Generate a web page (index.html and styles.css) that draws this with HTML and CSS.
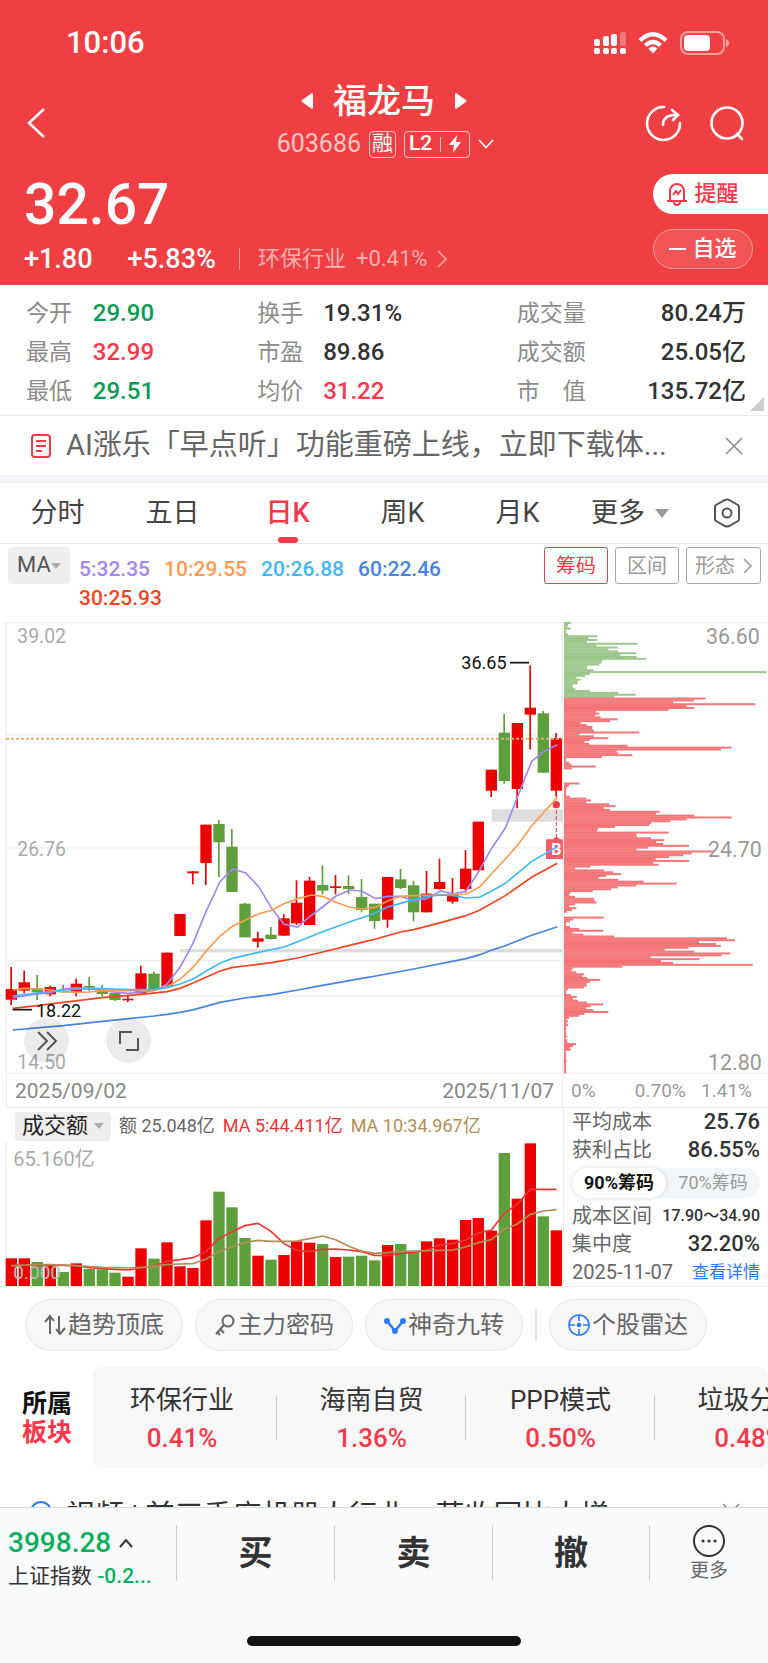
FILE: index.html
```
<!DOCTYPE html>
<html lang="zh-CN">
  <head>
    <meta charset="UTF-8" />
    <meta name="viewport" content="width=device-width, initial-scale=1.0" />
    <title>福龙马 603686</title>
    <link rel="stylesheet" href="styles.css">
  </head>
  <body>
    <header class="header">
      <div class="status-bar">
        <span class="clock">10:06</span>
        <div class="status-icons">
          <svg width="32" height="24" viewBox="0 0 32 24" fill="#fff">
            <rect x="0" y="8" width="6" height="7" rx="2" />
            <rect x="9" y="5" width="6" height="10" rx="2" />
            <rect x="17" y="3" width="6" height="12" rx="2" />
            <rect x="26" y="1" width="6" height="14" rx="2" opacity="0.3" />
            <rect x="0" y="17" width="6" height="6" rx="2" />
            <rect x="9" y="17" width="6" height="6" rx="2" />
            <rect x="17" y="17" width="6" height="6" rx="2" />
            <rect x="26" y="17" width="6" height="6" rx="2" />
          </svg>
          <svg width="30" height="24" viewBox="0 0 30 24" fill="none" stroke="#fff" stroke-width="4.4">
            <path d="M2 9.5 Q15 -3 28 9.5" />
            <path d="M7.5 14.5 Q15 7.5 22.5 14.5" />
            <path d="M10.5 17.5 Q15 13.5 19.5 17.5 L15 22.5 Z" fill="#fff" stroke="none" />
          </svg>
          <svg width="49" height="24" viewBox="0 0 49 24">
            <rect x="1" y="1" width="43" height="22" rx="7" fill="none" stroke="#fff" stroke-opacity="0.5" stroke-width="2" />
            <rect x="4" y="4" width="26" height="16" rx="4" fill="#fff" />
            <path d="M46 8 Q49 9 49 12 Q49 15 46 16 Z" fill="#fff" opacity="0.5" />
          </svg>
        </div>
      </div>

      <div class="nav">
        <button class="icon-btn nav-back" aria-label="返回">
          <svg width="20" height="32" viewBox="0 0 20 32" fill="none" stroke="#fff" stroke-width="2.5"><path d="M18 2 L3 16 L18 30" /></svg>
        </button>
        <div class="nav-title">
          <div class="name-row">
            <button class="icon-btn" aria-label="上一只">
              <svg width="12" height="16" viewBox="0 0 12 16" fill="#fff"><path d="M11 0 Q12 0 12 2 V14 Q12 16 11 16 L1 9 Q0 8 1 7 Z" /></svg>
            </button>
            <h1>福龙马</h1>
            <button class="icon-btn" aria-label="下一只">
              <svg width="12" height="16" viewBox="0 0 12 16" fill="#fff"><path d="M1 0 Q0 0 0 2 V14 Q0 16 1 16 L11 9 Q12 8 11 7 Z" /></svg>
            </button>
          </div>
          <div class="code-row">
            <span class="code">603686</span>
            <span class="tag">融</span>
            <span class="tag tag-l2">
              L2<i></i>
              <svg width="12" height="18" viewBox="0 0 12 18" fill="#fff"><path d="M8 0 L0 10 H5 L4 18 L12 7 H7 Z" /></svg>
            </span>
            <svg width="16" height="10" viewBox="0 0 16 10" fill="none" stroke="#fff" stroke-width="1.6"><path d="M1 1 L8 8.5 L15 1" /></svg>
          </div>
        </div>
        <div class="nav-actions">
          <button class="icon-btn" aria-label="分享">
            <svg width="38" height="38" viewBox="0 0 38 38" fill="none" stroke="#fff" stroke-width="2.6" stroke-linecap="round">
              <path d="M19 3 A16.5 16.5 0 1 0 35 19" />
              <path d="M18 21 C18 14 22 11 31 11" />
              <path d="M27 6 L33 11 L28 16" />
            </svg>
          </button>
          <button class="icon-btn" aria-label="搜索">
            <svg width="36" height="38" viewBox="0 0 36 38" fill="none" stroke="#fff" stroke-width="2.6" stroke-linecap="round">
              <circle cx="18" cy="19" r="15.5" />
              <path d="M28 30 L33 35" />
            </svg>
          </button>
        </div>
      </div>

      <div class="quote">
        <div>
          <div class="price">32.67</div>
          <div class="change">
            <span>+1.80</span>
            <span>+5.83%</span>
            <a href="#" class="industry">环保行业 <b>+0.41%</b>
              <svg width="10" height="18" viewBox="0 0 10 18" fill="none" stroke="currentColor" stroke-width="1.6"><path d="M1 1 L9 9 L1 17" /></svg>
            </a>
          </div>
        </div>
        <div class="quote-btns">
          <button class="alert-btn">
            <svg width="22" height="24" viewBox="0 0 22 24" fill="none" stroke="#f5384a" stroke-width="2">
              <path d="M4 18 V9 A7 7 0 0 1 18 9 V18 M1 19 H21 M8 20 A3 3 0 0 0 14 20" />
              <path d="M7 13 L10 9 L12 12 L15 8" />
            </svg>
            提醒
          </button>
          <button class="watch-btn"><i></i>自选</button>
        </div>
      </div>
    </header>

    <dl class="stats">
      <dt>今开</dt><dd class="down">29.90</dd>
      <dt>换手</dt><dd>19.31%</dd>
      <dt>成交量</dt><dd class="last">80.24万</dd>
      <dt>最高</dt><dd class="up">32.99</dd>
      <dt>市盈</dt><dd>89.86</dd>
      <dt>成交额</dt><dd class="last">25.05亿</dd>
      <dt>最低</dt><dd class="down">29.51</dd>
      <dt>均价</dt><dd class="up">31.22</dd>
      <dt>市　值</dt><dd class="last">135.72亿</dd>
    </dl>

    <div class="notice">
      <svg width="20" height="24" viewBox="0 0 20 24" fill="none" stroke="#f5384a" stroke-width="2">
        <rect x="1" y="1" width="18" height="22" rx="3" />
        <path d="M5 7 H15 M5 12 H15 M5 17 H11" />
      </svg>
      <a href="#">AI涨乐「早点听」功能重磅上线，立即下载体...</a>
      <button class="icon-btn" aria-label="关闭">
        <svg width="18" height="18" viewBox="0 0 18 18" fill="none" stroke="#888" stroke-width="1.5"><path d="M1 1 L17 17 M17 1 L1 17" /></svg>
      </button>
    </div>

    <nav class="tabs">
      <button>分时</button>
      <button>五日</button>
      <button class="active">日K</button>
      <button>周K</button>
      <button>月K</button>
      <button>更多<i class="caret"></i></button>
      <button aria-label="设置">
        <svg width="28" height="30" viewBox="0 0 28 30" fill="none" stroke="#555" stroke-width="2">
          <path d="M12 2 Q14 1 16 2 L25 7 Q26 8 26 9 V21 Q26 22 25 23 L16 28 Q14 29 12 28 L3 23 Q2 22 2 21 V9 Q2 8 3 7 Z" />
          <circle cx="14" cy="15" r="4.5" />
        </svg>
      </button>
    </nav>

    <div class="ma-bar">
      <button class="ma-btn">MA<i class="caret"></i></button>
      <div class="ma-values">
        <span class="ma5">5:32.35</span>
        <span class="ma10">10:29.55</span>
        <span class="ma20">20:26.88</span>
        <span class="ma60">60:22.46</span>
        <span class="ma30">30:25.93</span>
      </div>
      <div class="modes">
        <button class="active">筹码</button>
        <button>区间</button>
        <button>形态
          <svg width="9" height="16" viewBox="0 0 9 16" fill="none" stroke="#999" stroke-width="1.5"><path d="M1 1 L8 8 L1 15" /></svg>
        </button>
      </div>
    </div>

    <main class="charts">
      <div class="kline">
        <svg id="kline" viewBox="0 36 1689 1356"></svg>
        <div class="kline-tools">
          <button aria-label="展开">
            <svg width="22" height="20" viewBox="0 0 22 20" fill="none" stroke="#555" stroke-width="2"><path d="M2 1 L11 10 L2 19 M11 1 L20 10 L11 19" /></svg>
          </button>
          <button aria-label="全屏">
            <svg width="20" height="20" viewBox="0 0 20 20" fill="none" stroke="#555" stroke-width="2"><path d="M1 13 V1 H13 M19 7 V19 H7" /></svg>
          </button>
        </div>
      </div>
      <div class="chips-chart">
        <svg id="chips" viewBox="0 36 615 1356"></svg>
      </div>

      <div class="axis dates"><span>2025/09/02</span><span>2025/11/07</span></div>
      <div class="axis percents"><span>0%</span><span>0.70%</span><span>1.41%</span></div>

      <div class="volume">
        <div class="vol-head">
          <button class="vol-btn">成交额<i class="caret"></i></button>
          <span>额 25.048亿</span>
          <span class="vol5">MA 5:44.411亿</span>
          <span class="vol10">MA 10:34.967亿</span>
        </div>
        <svg id="volume" viewBox="0 216 1689 432"></svg>
      </div>
      <div class="chip-info">
        <div class="info-row"><span>平均成本</span><b>25.76</b></div>
        <div class="info-row"><span>获利占比</span><b>86.55%</b></div>
        <div class="switch">
          <button class="active">90%筹码</button>
          <button>70%筹码</button>
        </div>
        <div class="info-row"><span>成本区间</span><b class="small">17.90～34.90</b></div>
        <div class="info-row"><span>集中度</span><b>32.20%</b></div>
        <div class="info-row"><span>2025-11-07</span><a href="#">查看详情</a></div>
      </div>
    </main>

    <div class="tools">
      <button>
        <svg width="22" height="22" viewBox="0 0 22 22" fill="none" stroke="#666" stroke-width="2"><path d="M6 20 V2 M1 8 L6 2 L10 7 M15 2 V20 M12 15 L16 20 L21 14" /></svg>
        趋势顶底
      </button>
      <button>
        <svg width="22" height="22" viewBox="0 0 22 22" fill="none" stroke="#666" stroke-width="2"><circle cx="14" cy="7" r="5.5" /><path d="M10 11 L2 20 M6 15 L10 19 M3 18 L6 21" /></svg>
        主力密码
      </button>
      <button>
        <svg width="22" height="22" viewBox="0 0 22 22" fill="none" stroke="#2b7bff" stroke-width="2.5"><path d="M3 7 L11 17 L19 7" /><g fill="#2b7bff" stroke="none"><circle cx="3" cy="7" r="3" /><circle cx="11" cy="17" r="3" /><circle cx="19" cy="7" r="3" /></g></svg>
        神奇九转
      </button>
      <i class="sep"></i>
      <button>
        <svg width="22" height="22" viewBox="0 0 22 22" fill="none" stroke="#2b7bff" stroke-width="1.6"><circle cx="11" cy="11" r="10" /><circle cx="11" cy="11" r="1.5" fill="#2b7bff" /><path d="M11 1 V7 M11 15 V21 M1 11 H7 M15 11 H21" /></svg>
        个股雷达
      </button>
    </div>

    <section class="sectors">
      <h2>所属<br /><span>板块</span></h2>
      <div class="sector-list">
        <a href="#">环保行业<b>0.41%</b></a>
        <a href="#">海南自贸<b>1.36%</b></a>
        <a href="#">PPP模式<b>0.50%</b></a>
        <a href="#">垃圾分类<b>0.48%</b></a>
      </div>
    </section>

    <div class="news">
      <svg width="22" height="28" viewBox="0 0 22 28" fill="none" stroke="#2b7bff" stroke-width="2"><circle cx="11" cy="14" r="10" /></svg>
      <a href="#">视频 | 前三季度机器人行业，营收同比大增</a>
      <svg width="18" height="18" viewBox="0 0 18 18" fill="none" stroke="#888" stroke-width="1.5"><path d="M1 1 L17 17 M17 1 L1 17" /></svg>
    </div>

    <footer class="bottom">
      <div class="trade-bar">
        <a href="#" class="index">
          <span class="index-value">3998.28
            <svg width="14" height="10" viewBox="0 0 14 10" fill="none" stroke="#333" stroke-width="2"><path d="M1 9 L7 2 L13 9" /></svg>
          </span>
          <span class="index-name">上证指数 <b>-0.2...</b></span>
        </a>
        <button>买</button>
        <button>卖</button>
        <button>撤</button>
        <button class="more">
          <svg width="32" height="32" viewBox="0 0 32 32" fill="none" stroke="#333" stroke-width="2">
            <circle cx="16" cy="16" r="15" />
            <g fill="#333" stroke="none"><circle cx="10" cy="16" r="1.6" /><circle cx="16" cy="16" r="1.6" /><circle cx="22" cy="16" r="1.6" /></g>
          </svg>
          更多
        </button>
      </div>
      <div class="home-line"></div>
    </footer>

    <script src="chart.js"></script>
  </body>
</html>
```
FILE: styles.css
```
* {
  box-sizing: border-box;
  margin: 0;
  padding: 0;
}
body {
  font-family: Roboto, "Noto Sans CJK SC", sans-serif;
  background: #fff;
  color: #333;
  line-height: 1.2;
  overflow-x: hidden;
}
button {
  font: inherit;
  color: inherit;
  background: none;
  border: none;
  cursor: pointer;
}
a {
  color: inherit;
  text-decoration: none;
}
svg {
  display: block;
  flex: none;
}
b {
  font-weight: 500;
}
.icon-btn {
  display: flex;
}
.up {
  color: #f5384a;
}
.down {
  color: #0a9b52;
}
.caret {
  display: inline-block;
  border: 5px solid transparent;
  border-top: 6px solid #aaa;
  border-bottom: none;
}

/* header */
.header {
  background: #f03f42;
  color: #fff;
  height: 285px;
}
.status-bar {
  display: flex;
  justify-content: space-between;
  align-items: center;
  height: 84px;
  padding: 2px 39px 0 66px;
}
.clock {
  font-size: 31px;
  font-weight: 500;
}
.status-icons {
  display: flex;
  gap: 12px;
}
.nav {
  display: grid;
  grid-template-columns: 1fr auto 1fr;
  height: 76px;
}
.nav-back {
  align-items: center;
  height: 78px;
  padding-left: 26px;
}
.name-row {
  display: flex;
  align-items: center;
  justify-content: center;
  gap: 20px;
  height: 34px;
}
.name-row h1 {
  font-size: 34px;
  font-weight: 500;
}
.code-row {
  display: flex;
  align-items: center;
  gap: 8px;
  height: 52px;
  padding-left: 3px;
}
.code {
  font-size: 25px;
  color: #fbc8c9;
}
.tag {
  display: flex;
  align-items: center;
  justify-content: center;
  height: 27px;
  padding: 0 2px;
  border: 1px solid #fbc8c9;
  border-radius: 4px;
  font-size: 21px;
}
.tag-l2 {
  gap: 8px;
  padding: 0 8px 0 4px;
  font-weight: 500;
}
.tag-l2 i {
  width: 1px;
  height: 15px;
  background: #fbc8c9;
}
.nav-actions {
  display: flex;
  align-items: center;
  justify-content: flex-end;
  gap: 26px;
  height: 78px;
  padding-right: 23px;
}
.quote {
  display: flex;
  justify-content: space-between;
  padding-left: 24px;
}
.price {
  margin-top: 8px;
  font-size: 57px;
  font-weight: 500;
  line-height: 74px;
}
.change {
  display: flex;
  align-items: center;
  height: 34px;
  font-size: 27px;
  font-weight: 500;
}
.change span {
  margin-right: 35px;
}
.change span + span {
  margin-right: 23px;
}
.industry {
  display: flex;
  align-items: center;
  gap: 10px;
  padding-left: 18px;
  border-left: 1px solid #f79a9c;
  color: #f9b0b1;
  font-size: 22px;
  font-weight: 400;
  line-height: 22px;
}
.industry b {
  font-weight: 400;
}
.quote-btns {
  display: flex;
  flex-direction: column;
  gap: 15px;
  padding-top: 14px;
}
.quote-btns button {
  display: flex;
  align-items: center;
  justify-content: center;
  gap: 6px;
  height: 40px;
  font-size: 22px;
  font-weight: 500;
}
.alert-btn {
  width: 115px;
  padding-right: 16px;
  border-radius: 20px 0 0 20px;
  background: #fff;
  color: #f5384a;
}
.watch-btn {
  width: 100px;
  border: 1px solid #f8a0a2;
  border-radius: 20px;
  background: #f25356;
}
.watch-btn i {
  width: 17px;
  height: 2px;
  background: #fff;
}

/* key figures */
.stats {
  display: grid;
  grid-template-columns: 67fr 165fr 66fr 194fr 100fr 130fr;
  position: relative;
  padding: 9px 22px 4px 26px;
  border-bottom: 1px solid #ececec;
  line-height: 39px;
}
.stats dt {
  font-size: 23px;
  color: #8c8c8c;
  white-space: nowrap;
}
.stats dd {
  font-size: 24px;
  font-weight: 500;
}
.stats .last {
  text-align: right;
}
.stats::after {
  content: "";
  position: absolute;
  right: 4px;
  bottom: 4px;
  border-left: 14px solid transparent;
  border-bottom: 14px solid #ccc;
}

.notice {
  display: flex;
  align-items: center;
  gap: 15px;
  height: 67px;
  padding: 0 25px 0 31px;
  border-bottom: 8px solid #f0f3f8;
}
.notice a {
  flex: 1;
  font-size: 29px;
  color: #666;
  white-space: nowrap;
  overflow: hidden;
}

/* period tabs */
.tabs {
  display: grid;
  grid-template-columns: repeat(5, 115fr) 110fr 83fr;
  height: 61px;
  border-bottom: 1px solid #e4e4e4;
}
.tabs button {
  position: relative;
  display: flex;
  align-items: center;
  justify-content: center;
  gap: 10px;
  font-size: 27px;
  color: #444;
}
.tabs .caret {
  border-width: 9px 7px 0;
  border-top-color: #999;
}
.tabs .active {
  color: #f5384a;
  font-weight: 500;
}
.tabs .active::after {
  content: "";
  position: absolute;
  bottom: 0;
  width: 20px;
  height: 6px;
  border-radius: 3px;
  background: #f5384a;
}

.ma-bar {
  display: flex;
  align-items: flex-start;
  height: 78px;
  padding: 3px 7px 0 8px;
}
.ma-btn {
  display: flex;
  align-items: center;
  justify-content: center;
  width: 62px;
  height: 37px;
  border-radius: 4px;
  background: #eee;
  color: #555;
  font-size: 22px;
}
.ma-values {
  flex: 1;
  display: flex;
  flex-wrap: wrap;
  gap: 0 14px;
  padding: 8px 20px 0 9px;
  font-size: 21px;
  font-weight: 500;
  line-height: 29px;
}
.ma5 {
  color: #a385f5;
}
.ma10 {
  color: #ff9a4f;
}
.ma20 {
  color: #40b7f8;
}
.ma60 {
  color: #4583e4;
}
.ma30 {
  color: #f5431f;
}
.modes {
  display: flex;
  gap: 7px;
}
.modes button {
  display: flex;
  align-items: center;
  gap: 8px;
  height: 37px;
  padding: 0 11px;
  border: 1px solid #aaa;
  border-radius: 3px;
  color: #999;
  font-size: 20px;
}
.modes button:last-child {
  padding: 0 8px;
}
.modes .active {
  border-color: #f5384a;
  color: #f5384a;
}

/* charts */
.charts {
  display: grid;
  grid-template-columns: 563fr 205fr;
  border-bottom: 1px solid #f0f0f0;
}
.kline {
  position: relative;
}
.kline > svg,
.chips-chart > svg,
.volume > svg {
  width: 100%;
}
.grid {
  stroke: #f0f0f0;
  stroke-width: 5;
}
.rise {
  fill: #ec0000;
}
.fall {
  fill: #5d9f3a;
}
.line {
  fill: none;
  stroke: currentColor;
  stroke-width: 5;
}
.gap {
  fill: #ddd;
}
.last-price {
  stroke: #d9b27c;
  stroke-width: 6;
  stroke-dasharray: 9 6;
}
.scale {
  fill: #aaa;
  font-size: 58px;
}
.scale-right {
  fill: #999;
  font-size: 64px;
  text-anchor: end;
}
.mark {
  fill: #111;
  font-size: 54px;
}
.mark-line {
  stroke: #111;
  stroke-width: 5;
}
.buy {
  fill: #fb5a68;
}
.buy-dot {
  fill: #f5384a;
}
.buy-line {
  stroke: #f5384a;
  stroke-width: 3;
  stroke-dasharray: 12 6;
}
.buy-text {
  fill: #fff;
  font-size: 48px;
  font-weight: 700;
  text-anchor: middle;
}
.chip-loss {
  fill: #7db467;
  opacity: 0.75;
}
.chip-profit {
  fill: #f2484b;
  opacity: 0.75;
}
.kline-tools {
  position: absolute;
  left: 24px;
  bottom: 11px;
  display: flex;
  gap: 37px;
}
.kline-tools button {
  display: flex;
  align-items: center;
  justify-content: center;
  width: 45px;
  height: 45px;
  border-radius: 50%;
  background: rgba(0, 0, 0, 0.08);
}
.axis {
  display: flex;
  align-items: center;
  justify-content: space-between;
  height: 34px;
  padding-top: 2px;
  border-bottom: 1px solid #ececec;
  font-size: 19px;
  color: #999;
}
.dates {
  margin-left: 6px;
  padding-left: 8px;
  padding-right: 8px;
  border-left: 1px solid #ececec;
  border-right: 1px solid #ececec;
  font-size: 21px;
  color: #888;
}
.percents {
  padding-left: 8px;
  padding-right: 16px;
}
.percents span:nth-child(2) {
  margin-left: 24px;
}
.vol-head {
  display: flex;
  align-items: center;
  gap: 8px;
  height: 34px;
  padding: 2px 0 0 15px;
  font-size: 18px;
  color: #666;
  white-space: nowrap;
}
.vol-btn {
  display: flex;
  align-items: center;
  justify-content: center;
  gap: 6px;
  width: 96px;
  height: 29px;
  border-radius: 4px;
  background: #eee;
  color: #222;
  font-size: 22px;
}
.vol5 {
  color: #ec3434;
}
.vol10 {
  color: #b38d55;
}
.vol-scale {
  fill: #aaa;
  font-size: 60px;
}
.vol-zero {
  fill: #bbb;
  font-size: 57px;
}
.chip-info {
  padding: 0 8px;
  border-left: 1px solid #ececec;
  color: #666;
}
.info-row {
  display: flex;
  align-items: center;
  justify-content: space-between;
  height: 28px;
  font-size: 20px;
  white-space: nowrap;
}
.info-row b {
  color: #333;
  font-size: 22px;
}
.info-row .small {
  font-size: 16px;
}
.info-row a {
  color: #2b7bff;
  font-size: 17px;
}
.switch {
  display: flex;
  height: 30px;
  margin: 4px 0;
  border-radius: 15px;
  background: #f3f6f9;
}
.switch button {
  flex: 1;
  border-radius: 15px;
  color: #999;
  font-size: 18px;
  line-height: 30px;
}
.switch .active {
  background: #fff;
  box-shadow: 0 0 5px rgba(0, 0, 0, 0.15);
  color: #111;
  font-weight: 700;
}

/* tool shortcuts */
.tools {
  display: flex;
  align-items: center;
  gap: 12px;
  padding: 12px 25px 16px;
}
.tools button {
  display: flex;
  align-items: center;
  justify-content: center;
  gap: 2px;
  width: 158px;
  height: 52px;
  border: 1px solid #e8e8e8;
  border-radius: 26px;
  background: #f7f7f7;
  color: #666;
  font-size: 24px;
  white-space: nowrap;
}
.sep {
  width: 2px;
  height: 32px;
  background: #e4e4e4;
}

.sectors {
  display: flex;
  align-items: center;
}
.sectors h2 {
  flex: none;
  width: 93px;
  padding-left: 22px;
  color: #111;
  font-size: 25px;
  line-height: 29px;
}
.sectors h2 span {
  color: #f5384a;
}
.sector-list {
  flex: 1;
  display: flex;
  height: 101px;
  border-radius: 8px;
  background: #f7f7f7;
  overflow: hidden;
}
.sector-list a {
  position: relative;
  flex: none;
  display: flex;
  flex-direction: column;
  align-items: center;
  gap: 6px;
  width: 189px;
  padding-top: 17px;
  font-size: 26px;
  line-height: 32px;
}
.sector-list a:first-child {
  width: 184px;
  padding-right: 6px;
}
.sector-list a::after {
  content: "";
  position: absolute;
  right: 0;
  top: 28px;
  width: 1px;
  height: 45px;
  background: #ccc;
}
.sector-list b {
  color: #f5384a;
  font-size: 26px;
}

.news {
  display: flex;
  align-items: flex-start;
  gap: 14px;
  height: 39px;
  padding: 28px 28px 0 30px;
  overflow: hidden;
}
.news a {
  flex: 1;
  font-size: 29px;
  line-height: 40px;
  white-space: nowrap;
}
.news svg {
  margin-top: 2px;
}
.news svg:last-child {
  margin-top: 7px;
}

/* bottom bar */
.bottom {
  height: 156px;
  border-top: 1px solid #d8d9db;
  background: #f9fafc;
}
.trade-bar {
  display: grid;
  grid-template-columns: 176fr 158fr 158fr 157fr 119fr;
  height: 128px;
  padding-top: 17px;
}
.index {
  padding-left: 8px;
  white-space: nowrap;
}
.index-value {
  display: flex;
  align-items: center;
  gap: 8px;
  color: #0bae5c;
  font-size: 28px;
  font-weight: 500;
  line-height: 36px;
}
.index-name {
  display: block;
  font-size: 21px;
  line-height: 30px;
}
.index-name b {
  color: #0bae5c;
}
.trade-bar button {
  height: 56px;
  border-left: 1px solid #d0d0d0;
  font-size: 34px;
  font-weight: 700;
}
.trade-bar .more {
  display: flex;
  flex-direction: column;
  align-items: center;
  gap: 3px;
  color: #666;
  font-size: 19px;
  font-weight: 400;
}
.home-line {
  width: 274px;
  height: 10px;
  margin: 0 auto;
  border-radius: 5px;
  background: #131316;
}
```
FILE: chart.js
```
const STEP = 38.93;
const centerX = (i) => Math.round(34 + i * STEP);

// [up/down, high, body top, body bottom, low], then top of the volume bar
const candles = [
  ["r", 1071, 1137, 1169, 1185, 565], ["r", 1082, 1117, 1142, 1150, 565],
  ["g", 1095, 1135, 1147, 1170, 576], ["r", 1127, 1131, 1153, 1159, 588],
  ["g", 1124, 1142, 1147, 1148, 606], ["r", 1106, 1121, 1145, 1159, 580],
  ["g", 1101, 1128, 1133, 1143, 597], ["g", 1125, 1142, 1152, 1160, 598],
  ["g", 1148, 1148, 1170, 1173, 608], ["r", 1158, 1166, 1171, 1176, 620],
  ["r", 1067, 1090, 1150, 1150, 535], ["g", 1085, 1091, 1138, 1138, 566],
  ["r", 1028, 1028, 1128, 1128, 517], ["r", 912, 912, 978, 978, 589],
  ["r", 784, 784, 790, 823, 594], ["r", 644, 644, 759, 825, 451],
  ["g", 629, 642, 697, 801, 365], ["g", 657, 710, 846, 846, 412],
  ["g", 879, 881, 982, 982, 504], ["r", 965, 985, 995, 1013, 557],
  ["g", 951, 974, 987, 989, 569], ["r", 913, 925, 977, 977, 555],
  ["r", 811, 878, 940, 945, 514], ["r", 801, 812, 945, 945, 518],
  ["g", 766, 825, 842, 853, 522], ["r", 795, 829, 834, 853, 561],
  ["g", 796, 828, 837, 852, 560], ["g", 807, 861, 900, 907, 557],
  ["g", 881, 881, 933, 956, 571], ["r", 801, 801, 929, 953, 525],
  ["g", 777, 808, 834, 837, 522], ["g", 812, 826, 907, 934, 545],
  ["r", 783, 851, 907, 907, 514], ["r", 746, 816, 837, 839, 505],
  ["r", 804, 851, 875, 881, 509], ["r", 720, 776, 837, 848, 450],
  ["r", 635, 635, 781, 781, 444], ["r", 479, 479, 542, 561, 482],
  ["g", 312, 368, 513, 521, 249], ["r", 339, 339, 537, 595, 386],
  ["r", 166, 293, 314, 419, 220], ["g", 303, 310, 488, 488, 439],
  ["r", 369, 384, 542, 560, 481],
];

const averages = {
  ma5: "38,1163 73,1158 112,1152 151,1148 190,1137 229,1133 268,1137 307,1140 345,1146 384,1150 423,1146 462,1142 480,1135 501,1122 540,1072 579,1000 618,905 660,815 698,777 737,789 776,830 815,895 852,943 893,951 929,920 968,891 1007,859 1050,840 1085,843 1127,866 1163,859 1202,859 1245,873 1280,866 1322,843 1360,852 1398,843 1435,787 1474,716 1516,654 1555,555 1595,454 1632,424 1672,404",
  ma10: "38,1140 73,1135 112,1137 151,1140 190,1145 229,1147 268,1146 307,1142 384,1141 423,1142 462,1140 501,1130 540,1108 581,1070 620,1022 660,978 698,948 737,930 776,911 815,901 852,881 893,866 935,855 968,859 1007,877 1046,891 1085,897 1127,892 1163,873 1202,859 1241,857 1322,855 1400,852 1440,830 1474,792 1516,747 1555,703 1595,648 1672,562",
  ma20: "38,1158 112,1149 190,1140 268,1135 384,1139 462,1138 501,1133 540,1122 581,1106 620,1082 660,1060 698,1045 776,1027 852,1011 893,995 968,965 1046,937 1127,909 1163,891 1202,880 1241,869 1280,859 1322,855 1360,857 1398,864 1440,861 1474,844 1516,820 1555,788 1595,754 1672,710",
  ma30: "38,1195 112,1187 190,1177 307,1163 423,1153 501,1145 540,1135 581,1118 660,1083 698,1072 735,1068 815,1058 893,1044 968,1026 1085,997 1127,987 1202,966 1241,959 1322,938 1398,917 1440,900 1516,857 1595,802 1672,760",
  ma60: "38,1260 190,1247 307,1234 462,1218 501,1213 540,1207 581,1199 660,1177 735,1164 815,1154 893,1140 968,1126 1085,1105 1127,1098 1241,1077 1398,1046 1440,1034 1474,1021 1516,1007 1595,976 1672,950",
};

const vol5 = [586, 585, 586, 585, 586, 588, 593, 596, 598, 600, 594, 588, 574, 569, 563, 545, 505, 485, 467, 460, 484, 521, 541, 545, 538, 537, 540, 545, 556, 557, 550, 547, 540, 525, 521, 510, 489, 480, 430, 403, 358, 358, 358];
const vol10 = [588, 585, 584, 584, 585, 587, 590, 592, 593, 594, 592, 589, 584, 582, 581, 567, 545, 530, 518, 511, 514, 514, 513, 506, 498, 509, 529, 543, 550, 548, 545, 543, 542, 541, 540, 531, 518, 509, 477, 462, 433, 423, 419];

// chip distribution, one bar per 0.1 yuan from 36.60 down to 12.80
const chips = [
  20, 12, 10, 20, 6, 6, 12, 100, 73, 100, 69, 221, 97, 161, 133, 162, 217, 169, 218, 246,
  115, 112, 106, 69, 69, 89, 608, 78, 63, 37, 50, 41, 41, 26, 26, 34, 78, 163, 215, 151,
  425, 390, 328, 574, 368, 390, 314, 96, 106, 94, 110, 161, 138, 50, 68, 85, 85, 90, 226, 46,
  90, 133, 78, 61, 76, 190, 502, 471, 158, 163, 205, 114, 6, 6, 15, 22, 95, 24, 0, 0,
  0, 0, 0, 0, 0, 46, 16, 10, 6, 6, 6, 6, 18, 67, 81, 67, 135, 155, 119, 138,
  287, 276, 391, 503, 368, 318, 262, 256, 153, 102, 99, 314, 216, 219, 261, 301, 276, 297, 375, 253,
  217, 450, 383, 357, 315, 275, 375, 268, 284, 79, 33, 120, 147, 172, 126, 104, 163, 239, 338, 217,
  161, 141, 86, 19, 15, 33, 90, 92, 98, 33, 16, 37, 24, 9, 0, 0, 119, 28, 18, 6,
  6, 18, 46, 118, 26, 58, 151, 489, 513, 405, 456, 470, 374, 302, 391, 499, 473, 260, 406, 291,
  327, 566, 175, 27, 22, 36, 60, 55, 70, 108, 78, 68, 68, 60, 12, 6, 6, 20, 38, 27,
  42, 70, 117, 80, 66, 88, 133, 61, 46, 16, 8, 12, 8, 12, 6, 6, 6, 6, 6, 10,
  6, 10, 10, 36, 27, 18, 20, 6, 6, 6, 6, 6, 8, 6, 6, 6, 6, 6, 6,
];
const LOSS_COUNT = 40;

const rect = (cls, x, y, w, h) => `<rect class="${cls}" x="${x}" y="${y}" width="${w}" height="${h}" />`;
const line = (cls, x1, y1, x2, y2) => `<line class="${cls}" x1="${x1}" y1="${y1}" x2="${x2}" y2="${y2}" />`;
const text = (cls, x, y, value) => `<text class="${cls}" x="${x}" y="${y}">${value}</text>`;
const polyline = (cls, points) => `<polyline class="line ${cls}" points="${points}" />`;

function drawKline() {
  let out = "";
  [38, 374, 714, 1052, 1158, 1390].forEach((y) => (out += line("grid", 18, y, 1689, y)));
  out += line("grid", 19, 36, 19, 1392) + line("grid", 1688, 36, 1688, 1392);
  out += rect("gap", 540, 1017, 1149, 10) + rect("gap", 1475, 598, 214, 37);
  out += text("scale", 52, 98, "39.02") + text("scale", 52, 738, "26.76") + text("scale", 52, 1377, "14.50");

  candles.forEach(([dir, high, top, bottom, low], i) => {
    const cls = dir === "r" ? "rise" : "fall";
    const x = centerX(i);
    out += rect(cls, x - 3, high, 5, low - high);
    out += rect(cls, x - 17, top, 34, bottom - top);
  });
  out += line("last-price", 18, 386, 1689, 386);

  // buy marker
  out += `<circle class="buy-dot" cx="1669" cy="584" r="11" />` + line("buy-line", 1669, 600, 1669, 680);
  out += `<path class="buy" d="M1638 688 H1658 L1669 678 L1680 688 H1689 V747 H1638 Z" />`;
  out += text("buy-text", 1669, 734, "B");

  for (const name in averages) out += polyline(name, averages[name]);

  out += text("mark", 1384, 178, "36.65") + line("mark-line", 1530, 158, 1587, 158);
  out += text("mark", 108, 1221, "18.22") + line("mark-line", 38, 1199, 96, 1199);
  document.getElementById("kline").innerHTML = out;
}

function drawChips() {
  let out = line("grid", 0, 38, 615, 38) + line("grid", 0, 1390, 615, 1390);
  chips.forEach((len, i) => {
    if (len) out += rect(i < LOSS_COUNT ? "chip-loss" : "chip-profit", 3, 36 + i * 5.665, len, 6);
  });
  out += text("scale-right", 590, 101, "36.60") + text("scale-right", 596, 741, "24.70") + text("scale-right", 596, 1380, "12.80");
  document.getElementById("chips").innerHTML = out;
}

function drawVolume() {
  let out = line("grid", 19, 216, 19, 648);
  candles.forEach((c, i) => {
    out += rect(c[0] === "r" ? "rise" : "fall", centerX(i) - 17, c[5], 34, 648 - c[5]);
  });
  out += text("vol-scale", 40, 288, "65.160亿") + text("vol-zero", 40, 627, "0.000");
  out += polyline("vol5", vol5.map((y, i) => `${centerX(i)},${y}`).join(" "));
  out += polyline("vol10", vol10.map((y, i) => `${centerX(i)},${y}`).join(" "));
  document.getElementById("volume").innerHTML = out;
}

drawKline();
drawChips();
drawVolume();
```
